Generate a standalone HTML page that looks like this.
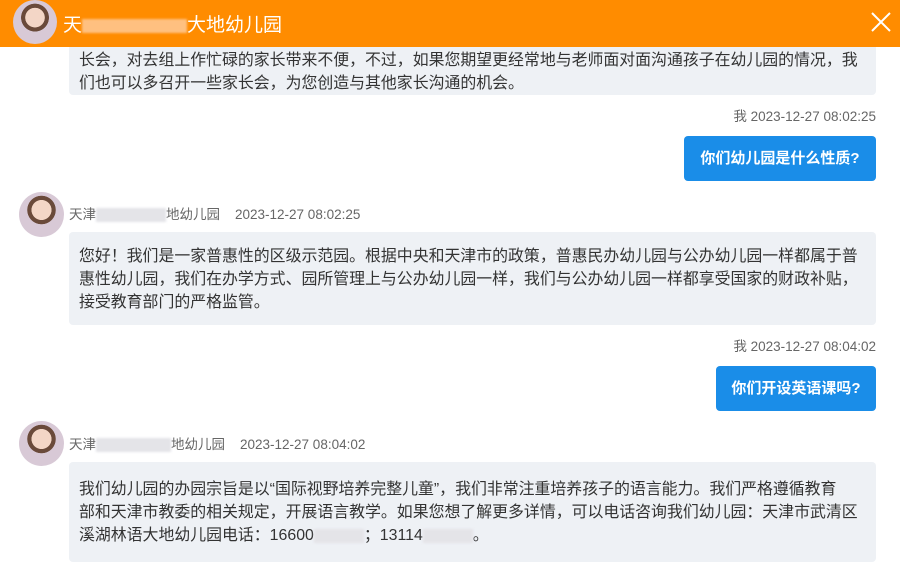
<!DOCTYPE html>
<html><head><meta charset="utf-8"><style>
*{margin:0;padding:0;box-sizing:border-box}
body{width:900px;height:547px;overflow:hidden;background:#fff;font-family:"Liberation Sans","Noto Sans CJK SC",sans-serif;position:relative;color:#333}
.hdr{position:absolute;left:0;top:0;width:900px;height:47px;background:#ff8c00;z-index:5}
.hdr .t{position:absolute;left:63px;top:10px;color:#fff;font-size:19px}
.av{position:absolute;border-radius:50%;background:radial-gradient(circle at 50% 40%,#f3d6c6 0 28%,#6a4a3a 29% 40%,#d8c9d6 41%);}
.bub{position:absolute;left:69px;width:807px;background:#eef1f5;border-radius:4px;font-size:15.9px;line-height:23px;color:#333;padding:0 10px;white-space:nowrap}
.me{position:absolute;right:24px;font-size:13.5px;color:#666}
.blue{position:absolute;right:24px;height:45px;background:#1a8de8;color:#fff;font-size:15px;font-weight:bold;border-radius:4px;line-height:45px;text-align:center}
.nm{position:absolute;left:69px;font-size:13.5px;color:#666}
.blur{display:inline-block;background:#e4e4e8;height:14px;vertical-align:middle;filter:blur(1px)}
.x{position:absolute;right:6px;top:9px;width:26px;height:26px}
</style></head><body>
<div class="hdr">
<div class="av" style="left:13px;top:0;width:44px;height:44px"></div>
<div class="t">天<span class="blur" style="width:105px;background:#ffc080"></span>大地幼儿园</div>
<svg class="x" viewBox="0 0 26 26"><path d="M4 4L22 22M22 4L4 22" stroke="#fff" stroke-width="2"/></svg>
</div>
<div class="bub" style="top:30px;height:65px;padding-top:19px">长会，对去组上作忙碌的家长带来不便，不过，如果您期望更经常地与老师面对面沟通孩子在幼儿园的情况，我<br>们也可以多召开一些家长会，为您创造与其他家长沟通的机会。</div>
<div class="me" style="top:105px">我 2023-12-27 08:02:25</div>
<div class="blue" style="top:136px;width:192px">你们幼儿园是什么性质?</div>
<div class="av" style="left:19px;top:192px;width:45px;height:45px"></div>
<div class="nm" style="top:203px">天津<span class="blur" style="width:70px"></span>地幼儿园 &nbsp;&nbsp; 2023-12-27 08:02:25</div>
<div class="bub" style="top:232px;height:93px;padding-top:13px">您好！我们是一家普惠性的区级示范园。根据中央和天津市的政策，普惠民办幼儿园与公办幼儿园一样都属于普<br>惠性幼儿园，我们在办学方式、园所管理上与公办幼儿园一样，我们与公办幼儿园一样都享受国家的财政补贴，<br>接受教育部门的严格监管。</div>
<div class="me" style="top:335px">我 2023-12-27 08:04:02</div>
<div class="blue" style="top:366px;width:160px">你们开设英语课吗?</div>
<div class="av" style="left:19px;top:421px;width:45px;height:45px"></div>
<div class="nm" style="top:433px">天津<span class="blur" style="width:75px"></span>地幼儿园 &nbsp;&nbsp; 2023-12-27 08:04:02</div>
<div class="bub" style="top:462px;height:100px;padding-top:16px">我们幼儿园的办园宗旨是以“国际视野培养完整儿童”，我们非常注重培养孩子的语言能力。我们严格遵循教育<br>部和天津市教委的相关规定，开展语言教学。如果您想了解更多详情，可以电话咨询我们幼儿园：天津市武清区<br>溪湖林语大地幼儿园电话：16600<span class="blur" style="width:50px"></span>；13114<span class="blur" style="width:50px"></span>。</div>
</body></html>
